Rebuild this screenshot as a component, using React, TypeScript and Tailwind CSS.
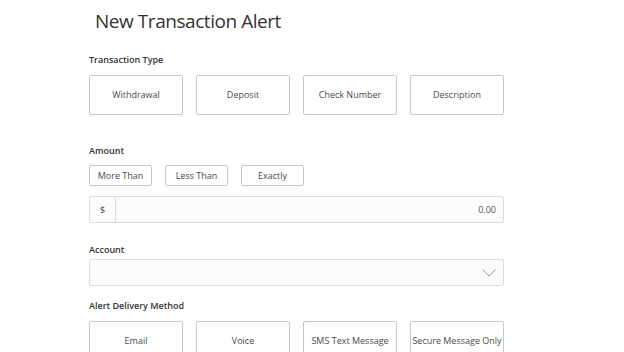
export default function App() {
  const types = ["Withdrawal", "Deposit", "Check Number", "Description"];
  const amounts = ["More Than", "Less Than", "Exactly"];
  const methods = ["Email", "Voice", "SMS Text Message", "Secure Message Only"];

  return (
    <main
      className="min-h-screen bg-white text-[#333] overflow-hidden"
      style={{ fontFamily: '"Open Sans", sans-serif' }}
    >
      <div className="w-[415px] ml-[89px]">
        {/* Title */}
        <h1 className="ml-[6px] pt-[8px] text-[19px] leading-[26px] tracking-[-0.45px] text-[#333]">
          New Transaction Alert
        </h1>

        {/* Transaction Type */}
        <p className="mt-[19px] text-[9px] leading-[14px] font-semibold text-[#333]">
          Transaction Type
        </p>
        <div className="mt-[8px] flex gap-[13px]">
          {types.map((t) => (
            <button
              key={t}
              className="w-[94px] h-[40px] border border-[#c8c8c8] rounded-[2px] bg-white text-[9px] text-[#4a4a4a]"
            >
              {t}
            </button>
          ))}
        </div>

        {/* Amount */}
        <p className="mt-[29px] text-[9px] leading-[14px] font-semibold text-[#333]">
          Amount
        </p>
        <div className="mt-[7px] flex gap-[13px]">
          {amounts.map((a) => (
            <button
              key={a}
              className="w-[63px] h-[21px] border border-[#c8c8c8] rounded-[2px] bg-white text-[9px] text-[#4a4a4a]"
            >
              {a}
            </button>
          ))}
        </div>
        <div className="mt-[10px] flex h-[27px] border border-[#dcdcdc] rounded-[2px] bg-[#fcfcfc]">
          <div className="w-[26px] flex items-center justify-center border-r border-[#dcdcdc] text-[9px] text-[#444]">
            $
          </div>
          <div className="flex-1 flex items-center justify-end pr-[7px] text-[9px] text-[#555]">
            0.00
          </div>
        </div>

        {/* Account */}
        <p className="mt-[20px] text-[9px] leading-[14px] font-semibold text-[#333]">
          Account
        </p>
        <div className="mt-[2px] flex items-center justify-end h-[27px] border border-[#dcdcdc] rounded-[2px] bg-[#fcfcfc] pr-[7px]">
          <svg width="14" height="8" viewBox="0 0 14 8" fill="none">
            <path d="M0.5 0.5L7 7L13.5 0.5" stroke="#999" strokeWidth="1" />
          </svg>
        </div>

        {/* Alert Delivery Method */}
        <p className="mt-[13px] text-[9px] leading-[14px] font-semibold text-[#333]">
          Alert Delivery Method
        </p>
        <div className="mt-[8px] flex gap-[13px]">
          {methods.map((m) => (
            <button
              key={m}
              className="w-[94px] h-[40px] border border-[#c8c8c8] rounded-[2px] bg-white text-[9px] text-[#4a4a4a] whitespace-nowrap"
            >
              {m}
            </button>
          ))}
        </div>
      </div>
    </main>
  );
}
